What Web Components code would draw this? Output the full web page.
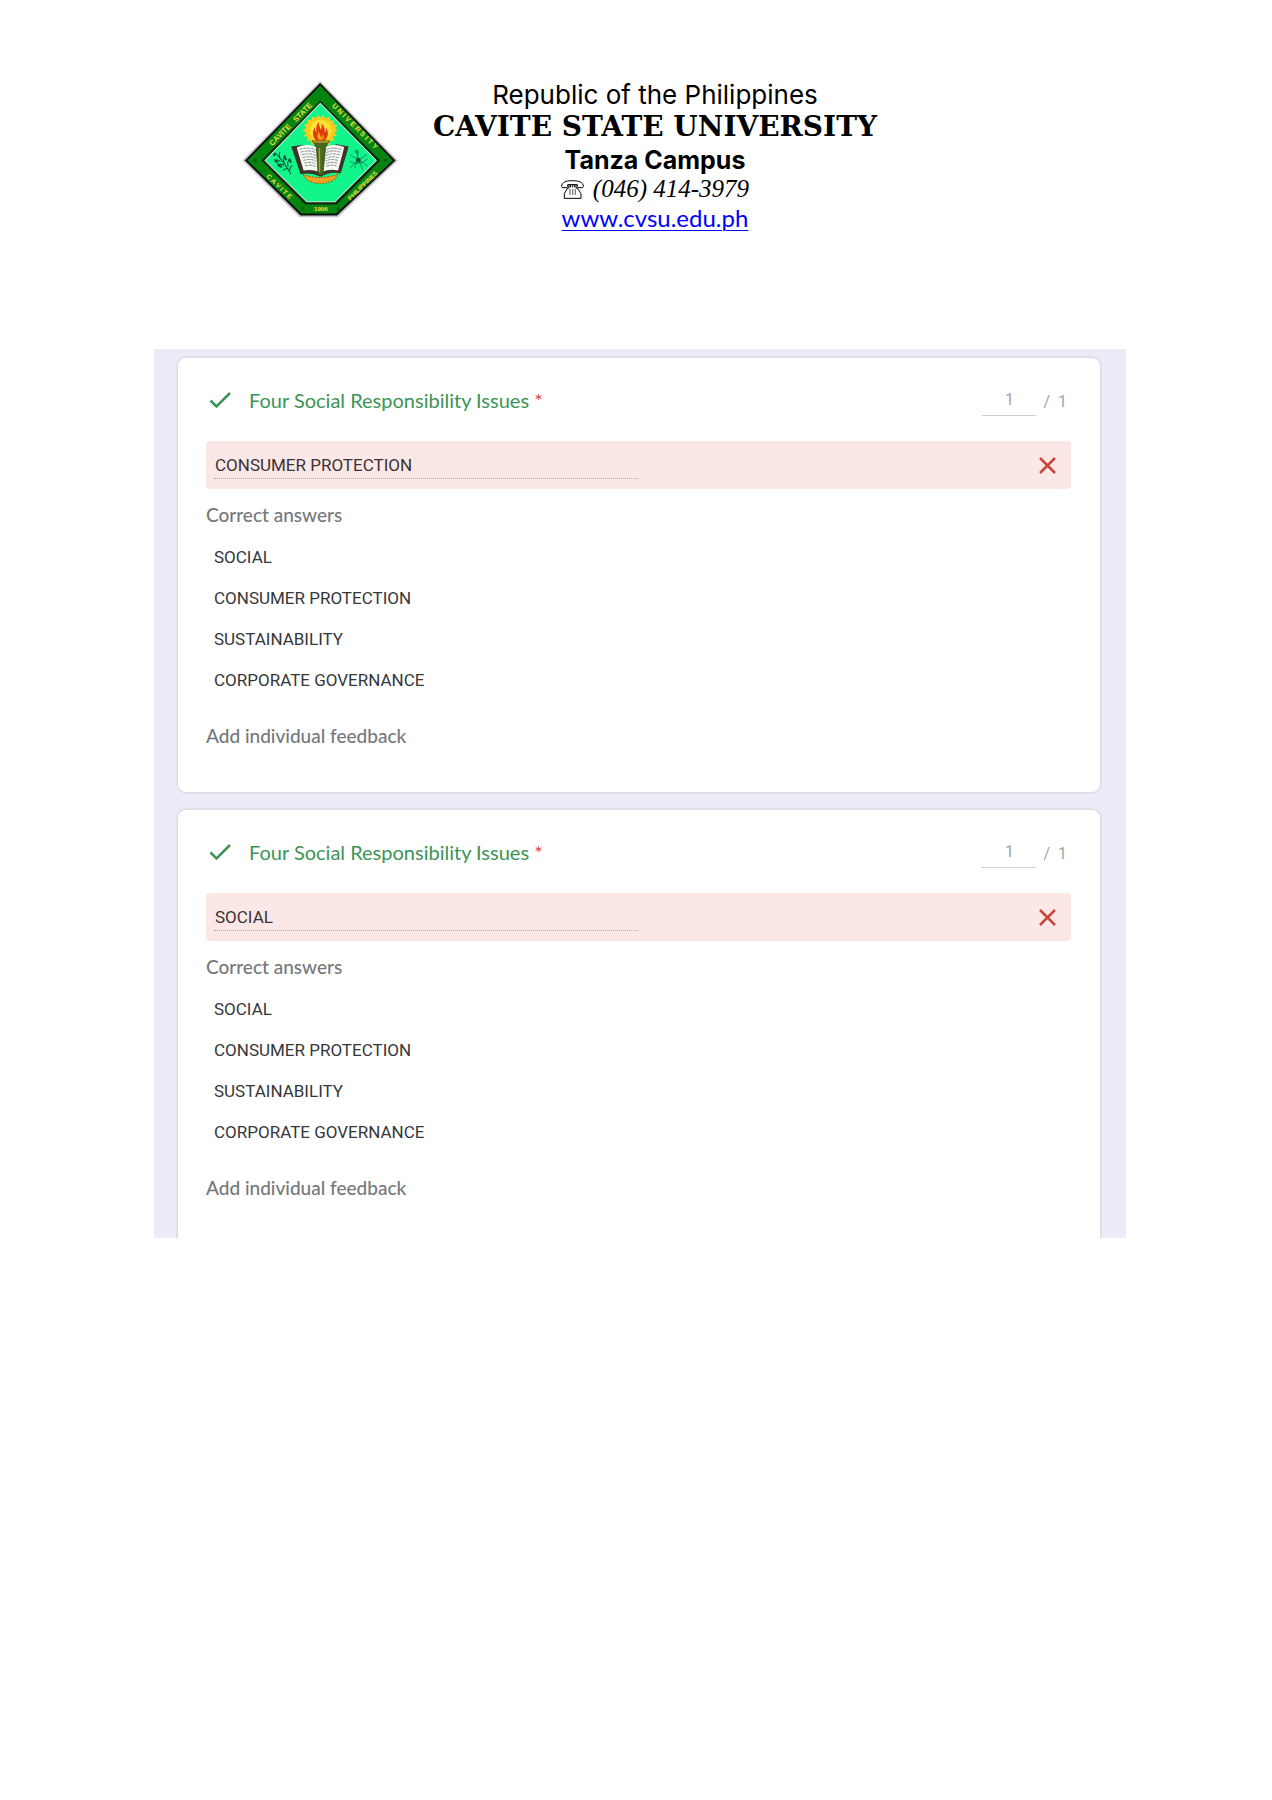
<!DOCTYPE html>
<html lang="en">
<head>
<meta charset="utf-8">
<title>Cavite State University - Tanza Campus</title>
<meta name="viewport" content="width=device-width, initial-scale=1">
<style>
  body { margin: 0; background: #fff; font-family: Roboto, sans-serif; color: #202124; }
</style>
</head>
<body>
<document-page>
  <letter-head slot="head">
    <span slot="country">Republic of the Philippines</span>
    <span slot="name">CAVITE STATE UNIVERSITY</span>
    <span slot="campus">Tanza Campus</span>
    <span slot="phone">(046) 414-3979</span>
  </letter-head>
  <form-panel>
    <question-card answer="CONSUMER PROTECTION">Four Social Responsibility Issues</question-card>
    <question-card answer="SOCIAL">Four Social Responsibility Issues</question-card>
  </form-panel>
</document-page>

<template id="page-t">
  <style>
    :host { display: block; padding: 79px 146px 80px 154px; }
    header { margin-bottom: 115px; }
  </style>
  <header><slot name="head"></slot></header>
  <main><slot></slot></main>
</template>

<template id="head-t">
  <style>
    :host { display: flex; align-items: flex-start; gap: 33px; padding-left: 87px; color: #000; }
    .lines { display: flex; flex-direction: column; align-items: center; text-align: center; white-space: nowrap; }
    .country, .campus { font-family: "Century Gothic", Inter, sans-serif; }
    .country { font-size: 26px; line-height: 31px; }
    h1 { margin: 0; font: 700 28px/34px "Bookman Old Style", "DejaVu Serif", serif; }
    .campus { font-size: 25px; font-weight: 700; line-height: 33px; }
    .phone { display: flex; align-items: center; gap: 9px; font: italic 25px/24px "Liberation Serif", serif; }
    .web { font: 24px/33px "Century Gothic", Lato, sans-serif; }
    a { color: #00f; text-decoration: underline; text-decoration-thickness: 1px; text-underline-offset: 3px; }
  </style>
  <university-seal></university-seal>
  <div class="lines">
    <div class="country"><slot name="country"></slot></div>
    <h1><slot name="name"></slot></h1>
    <div class="campus"><slot name="campus"></slot></div>
    <div class="phone">
      <svg width="23" height="19" viewBox="0 0 69 57" fill="none" stroke="#000" stroke-width="3" aria-hidden="true">
        <path d="M2 19C2 6 16 2 34 2s33 4 33 17l-2 4H51l-2-4v-5H20v5l-2 4H4z"/>
        <path d="M24 14v10h-4L10 41v14h50V41L49 24h-4V14M28 14v8M34 14v8M40 14v8"/>
        <path d="M25 30h20M25 36h20M25 42h20" stroke-dasharray="4 4"/>
      </svg>
      <slot name="phone"></slot>
    </div>
    <div class="web"><a href="http://www.cvsu.edu.ph">www.cvsu.edu.ph</a></div>
  </div>
</template>

<template id="seal-t">
  <style>
    :host { display: block; flex: none; }
    svg { display: block; }
    text { font-family: "Liberation Sans", sans-serif; font-weight: 700; fill: #e6e04a; text-anchor: middle; }
  </style>
  <svg width="159" height="141" viewBox="25 32 462 408" role="img" aria-label="Seal">
    <path d="M255 37L481 268 307 433H195L29 268z" fill="#c9c2cc"/>
    <path d="M255 43L474 268 304 428H198L36 268z" fill="#08130a"/>
    <path d="M255 50L466 268 301 422H201L44 268z" fill="#07830f"/>
    <path d="M255 94L430 268 303 396H211L84 268z" fill="#082b10"/>
    <path d="M255 102L418 268 298 388H216L95 268z" fill="#12f58b" stroke="#d5e5da" stroke-width="3"/>
    <g fill="#062" stroke="#031"><circle cx="66" cy="267" r="4"/><circle cx="445" cy="267" r="4"/><circle cx="204" cy="408" r="4"/><circle cx="307" cy="408" r="4"/></g>
    <path id="p1" d="M103 239L246 96" fill="none"/>
    <path id="p2" d="M275 98L427 249" fill="none"/>
    <path id="p3" d="M92 310L171 387" fill="none"/>
    <path id="p4" d="M337 390L428 301" fill="none"/>
    <text font-size="22"><textPath href="#p1" startOffset="50%">CAVITE &#160; STATE</textPath></text>
    <text font-size="21"><textPath href="#p2" startOffset="50%">U N I V E R S I T Y</textPath></text>
    <text font-size="19"><textPath href="#p3" startOffset="50%">C A V I T E</textPath></text>
    <text font-size="18"><textPath href="#p4" startOffset="50%">PHILIPPINES</textPath></text>
    <text x="257" y="415" font-size="18">1906</text>
    <path d="M306 180L296 186 303 196 291 199 295 211 283 210 283 222 230 222 229 210 217 211 220 200 208 197 215 187 205 180 215 173 208 164 220 161 218 149 230 151 231 140 242 145 249 136 256 144 264 136 270 146 282 141 283 153 295 151 293 163 305 165 298 174z" fill="#ffc91c"/>
    <circle cx="256" cy="181" r="31" fill="#ffe338"/>
    <path d="M243 210C232 198 232 184 239 171c1 9 3 13 6 15-4-15 2-22 6-31 0 14 4 17 6 24 4-8 3-15 1-20 10 10 12 19 10 28 4-5 5-9 5-14 7 14 6 27-5 37z" fill="#e33a0c"/>
    <path d="M251 207c-6-8-3-16 1-23 1 11 5 13 7 20 3-5 4-10 3-14 6 8 3 13 0 17z" fill="#ffab16"/>
    <path d="M205 309q50 17 101-1l-11 16q-39 22-79 0z" fill="#f3a321" stroke="#a35d06" stroke-width="3" stroke-dasharray="5 4"/>
    <path d="M171 227L198 308Q229 301 256 315Q284 299 315 305L338 227 303 221 258 236 205 222z" fill="#3d3528"/>
    <path d="M187 230Q221 214 253 235V302Q234 293 207 297zM325 229Q288 214 260 235V302Q282 291 307 297z" fill="#fafaf5"/>
    <g stroke="#929a9a" stroke-width="3" fill="none" stroke-dasharray="9 2">
      <path d="M195 236q26-9 47 2M198 244q26-9 44 2M201 252q24-8 41 2M204 260q22-7 38 2M206 268q22-7 36 2M209 276q20-6 33 2M211 284q18-6 31 2"/>
      <path d="M316 236q-26-9-45 2M314 244q-24-9-43 2M312 252q-22-8-41 2M309 260q-20-7-38 2M307 268q-20-7-36 2M305 276q-18-6-34 2M303 284q-18-6-32 2"/>
    </g>
    <path d="M232 211H282L271 229 263 310H249L244 229z" fill="#4c681c" stroke="#2b3c12" stroke-width="2"/>
    <path d="M235 214h44" stroke="#c8a52d" stroke-width="4"/><path d="M253 232v70" stroke="#91ad35" stroke-width="4"/>
    <g fill="none" stroke="#125438" stroke-width="3">
      <path d="M124 246q23 22 46 61M122 266q13-1 17 5M138 243q-5 12 3 22M130 280q14-4 20 3M153 253q-8 12-2 22M147 297q10-8 15-5M166 262q-8 12-4 23M174 282q-9 8-8 20"/>
      <path d="M124 246l-4 9M151 254l5 13M166 264l4 10M132 281l12 6M123 267l9 7" stroke-width="6"/>
    </g>
    <g fill="none" stroke="#16694b" stroke-width="2">
      <path d="M342 251l24 15 27 18M391 250l-25 17-24 22M360 237l7 31 12 26M366 242l-10 48"/>
      <circle cx="366" cy="267" r="6" fill="#174d3d"/><circle cx="361" cy="242" r="4"/><path d="M341 270q24 16 51-6"/>
    </g>
  </svg>
</template>

<template id="panel-t">
  <style>
    :host { display: flex; flex-direction: column; gap: 16px; background: #eeebf8; padding: 8px 25px 0 23px; overflow: hidden; }
    ::slotted(:last-child) { border-bottom: 0; border-bottom-left-radius: 0; border-bottom-right-radius: 0; padding-bottom: 38px; }
  </style>
  <slot></slot>
</template>

<template id="card-t">
  <style>
    :host { display: block; box-sizing: border-box; background: #fff; border: 1px solid #dcdae2; border-radius: 9px; box-shadow: 0 0 1px 1px #e3e1ea; padding: 26px 29px 44px 28px; }
    .head { display: flex; align-items: center; height: 32px; margin-bottom: 25px; padding-right: 4px; }
    .check { flex: none; margin: 0 18px 0 3px; }
    label.q { flex: 1; font: 20px/32px Lato, sans-serif; color: #3c9455; }
    .star { color: #d44a40; }
    .score { display: flex; align-items: flex-start; gap: 7px; color: #a3a5a8; font: 16px/24px Roboto, sans-serif; }
    .score span { padding-top: 6px; }
    input { font: inherit; color: inherit; border: 0; border-radius: 0; padding: 0; margin: 0; background: none; outline: 0; }
    .score input { width: 54px; height: 32px; box-sizing: border-box; text-align: center; border-bottom: 1px solid #cfcfd2; }
    .answer { display: flex; align-items: center; justify-content: space-between; height: 48px; padding: 0 15px 0 8px; background: #fbe8e6; border-radius: 4px; }
    .answer input { width: 50%; height: 26px; box-sizing: content-box; padding: 0 2px 0 1px; font: 17px/24px Roboto, sans-serif; color: #3a3334; border-bottom: 1px dotted #b9a5a5; }
    h2 { margin: 14px 0 0; font: 500 19px/24px Lato, sans-serif; color: #74787c; }
    ul { list-style: none; margin: 10px 0 0; padding: 0 0 0 8px; font: 17px/41px Roboto, sans-serif; color: #35373a; }
    button { display: block; margin: 23px 0 0; padding: 0; border: 0; background: none; font: 500 19px/24px Lato, sans-serif; color: #74787c; }
  </style>
  <div class="head">
    <svg class="check" width="22" height="18" viewBox="0 0 22 18" aria-hidden="true"><path d="M1.500 9.500L7.500 15.500 21 2" fill="none" stroke="#3c9455" stroke-width="2.500"/></svg>
    <label class="q" for="answer"><slot></slot> <span class="star">*</span></label>
    <div class="score"><input value="1" aria-label="Score"><span>/&nbsp; 1</span></div>
  </div>
  <div class="answer">
    <input id="answer" type="text" readonly>
    <svg width="17" height="17" viewBox="0 0 17 17" role="img" aria-label="Incorrect"><path d="M1 1L16 16M16 1L1 16" stroke="#c9453f" stroke-width="2.500"/></svg>
  </div>
  <h2>Correct answers</h2>
  <ul><li>SOCIAL</li><li>CONSUMER PROTECTION</li><li>SUSTAINABILITY</li><li>CORPORATE GOVERNANCE</li></ul>
  <button type="button">Add individual feedback</button>
</template>

<script>
  class TemplateElement extends HTMLElement {
    constructor() {
      super();
      this.attachShadow({ mode: 'open' })
        .append(document.getElementById(this.constructor.template).content.cloneNode(true));
    }
  }
  class UniversitySeal extends TemplateElement { static template = 'seal-t'; }
  class LetterHead extends TemplateElement { static template = 'head-t'; }
  class QuestionCard extends TemplateElement {
    static template = 'card-t';
    connectedCallback() {
      this.shadowRoot.getElementById('answer').value = this.getAttribute('answer');
    }
  }
  class FormPanel extends TemplateElement { static template = 'panel-t'; }
  class DocumentPage extends TemplateElement { static template = 'page-t'; }
  customElements.define('university-seal', UniversitySeal);
  customElements.define('letter-head', LetterHead);
  customElements.define('question-card', QuestionCard);
  customElements.define('form-panel', FormPanel);
  customElements.define('document-page', DocumentPage);
</script>
</body>
</html>
